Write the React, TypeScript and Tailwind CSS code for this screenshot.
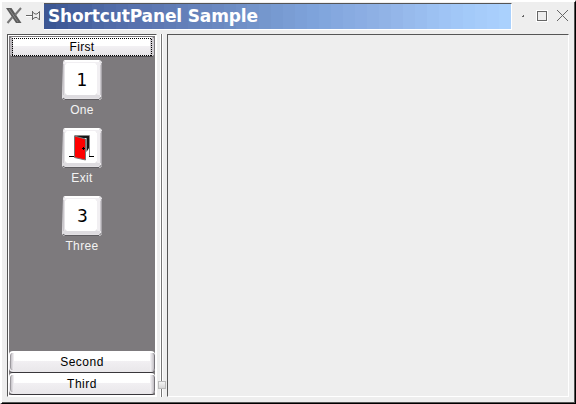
import type { ReactNode } from 'react';

function KeyCap({ children }: { children: ReactNode }) {
  return (
    <div className="relative h-10 w-10">
      <svg className="absolute inset-0" width="40" height="40" viewBox="0 0 40 40">
        <path d="M2 0H38L40 2V38L38 40H2L0 38L1 2Z" fill="#e4e2e5" />
        <path d="M1 38L3 39.5H37L39.5 37" fill="none" stroke="#5f5d61" />
        <path d="M39.5 3V37" stroke="#aaa7ac" />
        <path d="M2 2H38V4H2ZM35 3H38V33L39 37H37L35 34Z" fill="#f1eff2" />
        <path d="M1 35H38V38H2Z" fill="#dedce0" />
        <path d="M1.5 4V35M38.5 5V35" stroke="#cbc8cd" />
        <path d="M5 3H33L35 5V33L33 35H5L3 33V5Z" fill="#fff" />
        <path d="M3 1H37" stroke="#fff" strokeWidth="2" />
      </svg>
      <div className="relative flex h-full items-center justify-center">{children}</div>
    </div>
  );
}

function Shortcut({ label, children }: { label: string; children: ReactNode }) {
  return (
    <div className="flex h-[68px] flex-col items-center">
      <KeyCap>{children}</KeyCap>
      <span className="mt-[2px] text-[12px] leading-4 tracking-[0.35px] text-[#f3f3f3]">{label}</span>
    </div>
  );
}

function BarButton({ label }: { label: string }) {
  return (
    <div className="relative flex h-[22px] items-center justify-center rounded-[4px] border-b border-[#39373b] bg-linear-to-b from-white from-45% via-[#f1eff2] via-50% to-[#e9e7ea]">
      <i className="absolute top-[2px] left-[1px] h-[17px] w-[4px] rounded-l-[3px] border-l border-[#9b989d] bg-linear-to-r from-[#c5c2c7] to-[#f6f4f7]" />
      <i className="absolute top-[2px] right-0 h-[18px] w-[5px] rounded-r-[3px] border-r border-[#77747a] bg-linear-to-r from-[#f8f6f9] to-[#c2bfc4]" />
      <span className="relative text-[12px] leading-4 tracking-[0.5px] text-black">{label}</span>
    </div>
  );
}

const stops = [
  [60, 87, 148], [83, 110, 170], [99, 127, 185], [114, 147, 201],
  [127, 164, 220], [145, 178, 230], [160, 198, 246], [172, 211, 255],
];

const bands = Array.from({ length: 39 }, (_, i) => {
  const at = (i / 39) * (stops.length - 1);
  const low = Math.floor(at);
  const mix = at - low;
  const rgb = stops[low].map((c, k) => Math.round(c + (stops[low + 1][k] - c) * mix));
  return `rgb(${rgb.join(',')})`;
});

function TitleBar() {
  return (
    <header className="flex h-[32px] shrink-0 items-start">
      <div className="flex w-[42px] items-center pt-[5px] pl-[4px]">
        <svg width="17" height="17" viewBox="0 0 17 17">
          <path d="M0 1H5.5L15.5 16H10Z" fill="#5c5c5c" />
          <path d="M15 1L9 8M6.5 10L1.5 16" fill="none" stroke="#777" strokeWidth="2" />
          <path d="M3 2L12 15" stroke="#888" />
        </svg>
        <svg className="ml-[2px]" width="16" height="13" viewBox="0 0 16 13" fill="none" stroke="#666">
          <path d="M1 7.5H7" stroke="#fff" />
          <path d="M1 6.5H7M7.5 2V11M7.5 3L10 5H12L14.5 2.5V11L12 8.5H10L7.5 10" />
        </svg>
      </div>
      <div className="relative mt-px h-[27px] w-[468px] border-t border-r border-b border-t-[#555] border-r-white border-b-white">
        <div className="flex h-full">
          {bands.map((color) => <i key={color} className="h-full flex-1" style={{ backgroundColor: color }} />)}
        </div>
        <span className="absolute top-px left-[4px] font-['DejaVu_Sans',sans-serif] text-[17px] leading-[22px] font-bold tracking-[-0.14px] whitespace-nowrap text-white">ShortcutPanel Sample</span>
      </div>
      <svg className="ml-[8px]" width="50" height="24" viewBox="520 2 50 24" fill="none" stroke="#666" shapeRendering="crispEdges">
        <path d="M522 16.5H524M523 15.5H524" />
        <rect x="536.5" y="10.5" width="11" height="11" stroke="#fff" />
        <rect x="537.5" y="11.5" width="9" height="9" />
        <path d="M557.5 10.5L568 21M567.5 10.5L557 21" />
      </svg>
    </header>
  );
}

export default function App() {
  return (
    <main className="flex h-[404px] w-[576px] flex-col overflow-hidden border-t-2 border-r border-b border-l-2 border-t-white border-r-black border-b-black border-l-white bg-[#eee] font-['Liberation_Sans',Arial,sans-serif] [box-shadow:inset_-1px_-1px_#555]">
      <TitleBar />
      <section className="flex h-[363px] shrink-0 pl-[5px]">
        <aside className="flex w-[150px] flex-col border border-[#555] border-r-white border-b-white">
          <div className="flex h-full flex-col border border-white bg-[#7d7a7d]">
            <div className="relative mx-[1px] mt-[1px] flex h-[20px] shrink-0 items-center justify-center rounded-[3px] border-b border-[#4d4a4e] bg-linear-to-b from-white from-50% via-[#f2f0f3] to-[#e7e5e8]">
              <i className="absolute top-px left-0 h-[17px] w-[3px] bg-[#bbb8bd]" />
              <i className="absolute top-px right-0 h-[17px] w-[4px] bg-[#d0cdd2]" />
              <svg className="absolute top-[1px] left-[2px]" width="140" height="18" shapeRendering="crispEdges">
                <path d="M0 .5H140M0 17.5H140M.5 0V18M139.5 1V18" fill="none" stroke="#000" strokeDasharray="1 1" />
              </svg>
              <span className="relative text-[12px] leading-4 tracking-[0.35px] text-black">First</span>
            </div>
            <div className="flex-1 pt-[3px]">
              <Shortcut label="One"><span className="font-['DejaVu_Sans',sans-serif] text-[17px] leading-none text-black">1</span></Shortcut>
              <Shortcut label="Exit">
                <svg width="40" height="40" viewBox="0 0 40 40">
                  <path d="M7 28.5H12M27 28.5H32" stroke="#000" />
                  <path d="M13 7H27V20L24.5 24V10H13Z" fill="#151515" />
                  <path d="M12.5 7.5H27.5V28" fill="none" stroke="#888" />
                  <path d="M12.5 8L23.5 11V32L12.5 29.5Z" fill="#f00" stroke="#777" />
                  <path d="M20 20.5H23M21.5 19V22" stroke="#000" />
                </svg>
              </Shortcut>
              <Shortcut label="Three"><span className="ml-px font-['DejaVu_Sans',sans-serif] text-[17px] leading-none text-black">3</span></Shortcut>
            </div>
            <BarButton label="Second" />
            <BarButton label="Third" />
          </div>
        </aside>
        <div className="relative flex w-[10px] justify-center">
          <i className="ml-[-1px] w-[3px] border-r border-l border-r-white border-l-white bg-[#777]" />
          <i className="absolute bottom-[8px] left-[1px] h-[8px] w-[8px] border border-[#bbb] bg-linear-to-b from-[#f4f4f4] to-[#d7d7d7]" />
        </div>
        <div className="w-[402px] border border-[#555] border-r-white border-b-white" />
      </section>
    </main>
  );
}
